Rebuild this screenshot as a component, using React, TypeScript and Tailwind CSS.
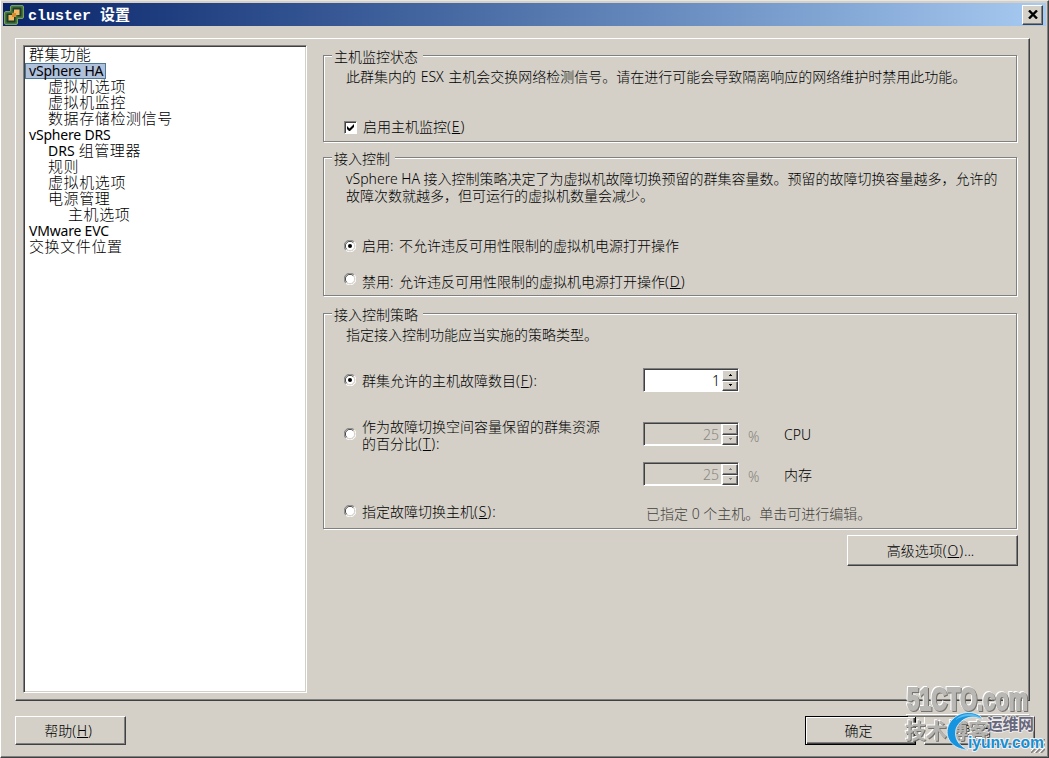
import React from 'react';
import clsx from 'clsx';

const treeItems = [
  { label: '群集功能', level: 0 },
  { label: 'vSphere HA', level: 0, latin: true, selected: true },
  { label: '虚拟机选项', level: 1 },
  { label: '虚拟机监控', level: 1 },
  { label: '数据存储检测信号', level: 1 },
  { label: 'vSphere DRS', level: 0, latin: true },
  { label: '组管理器', prefix: 'DRS', level: 1 },
  { label: '规则', level: 1 },
  { label: '虚拟机选项', level: 1 },
  { label: '电源管理', level: 1 },
  { label: '主机选项', level: 2 },
  { label: 'VMware EVC', level: 0, latin: true },
  { label: '交换文件位置', level: 0 },
];

const indents = ['pl-1', 'pl-[23px]', 'pl-[43px]'];

const AppIcon: React.FC = () => (
  <svg width="20" height="20" viewBox="0 0 20 20">
    <rect x="6" y="0" width="14" height="14" rx="3" fill="#a9c777" />
    <rect x="0" y="6" width="14" height="14" rx="3" fill="#a9c777" />
    <rect x="7.5" y="1.5" width="11" height="11" rx="2" fill="#1c3d2c" stroke="#44753c" strokeWidth="2" />
    <rect x="1.5" y="7.5" width="11" height="11" rx="2" fill="#1c3d2c" stroke="#44753c" strokeWidth="2" />
    <rect x="10" y="4.5" width="5.5" height="5.5" fill="#f0b860" />
    <rect x="4.5" y="10" width="5.5" height="5.5" fill="#f0b860" />
    <rect x="8" y="8" width="4" height="4" fill="#d98a2c" />
  </svg>
);

const GroupBox: React.FC<{ title: string; className: string; children: React.ReactNode }> = ({ title, className, children }) => (
  <section className={clsx('flex flex-col border border-[#808080] shadow-[1px_1px_0_#fff,inset_1px_1px_0_#fff]', className)}>
    <h2 className="-mt-[8px] ml-[8px] h-[18px] self-start bg-[#d4d0c8] pl-[2px] pr-[5px] font-light">{title}</h2>
    {children}
  </section>
);

const Hotkey: React.FC<{ letter: string }> = ({ letter }) => (
  <span className="tracking-[0.9px]">
    (<u>{letter}</u>)
  </span>
);

const Radio: React.FC<{ checked?: boolean }> = ({ checked }) => (
  <svg width="12" height="12" viewBox="0 0 12 12" className="shrink-0">
    <circle cx="6" cy="6" r="5" fill="#fff" />
    <path d="M1.8 10.2A5.5 5.5 0 0 1 10.2 1.8" fill="none" stroke="#808080" />
    <path d="M2.7 9.3A4.5 4.5 0 0 1 9.3 2.7" fill="none" stroke="#404040" />
    <path d="M10.2 1.8A5.5 5.5 0 0 1 1.8 10.2" fill="none" stroke="#fff" />
    <path d="M9.3 2.7A4.5 4.5 0 0 1 2.7 9.3" fill="none" stroke="#d4d0c8" />
    {checked && <circle cx="6" cy="6" r="2" fill="#000" />}
  </svg>
);

const SpinButton: React.FC<{ down?: boolean; disabled?: boolean }> = ({ down, disabled }) => (
  <div className="flex h-[11px] w-[16px] items-center justify-center border border-b-[#404040] border-l-white border-r-[#404040] border-t-white bg-[#d4d0c8] shadow-[inset_-1px_-1px_0_#808080]">
    <svg width="5" height="3" viewBox="0 0 5 3">
      <path d={down ? 'M1 0h3v1h-1v1h-1v-1h-1z' : 'M2 0h1v1h1v1h-3v-1h1z'} fill={disabled ? '#808080' : '#000'} />
    </svg>
  </div>
);

const Spinner: React.FC<{ value: number; disabled?: boolean }> = ({ value, disabled }) => (
  <div
    className={clsx(
      'mr-px flex h-[24px] w-[96px] shrink-0 border border-b-white border-l-[#808080] border-r-white border-t-[#808080]',
      disabled ? 'bg-[#d4d0c8] text-[#8a8880]' : 'bg-white'
    )}
  >
    <div className="flex flex-1 border-l border-t border-[#404040]">
      <span className={clsx('flex-1 pr-[2px] pt-[2px] text-right', disabled && 'border-b border-r border-white')}>{value}</span>
      <div className="flex w-[16px] flex-col">
        <SpinButton disabled={disabled} />
        <SpinButton down disabled={disabled} />
      </div>
    </div>
  </div>
);

const Button: React.FC<{ className: string; primary?: boolean; children: React.ReactNode }> = ({ className, primary, children }) => (
  <button
    className={clsx(
      'flex items-center justify-center border pr-[4px] font-light',
      primary
        ? 'border-black shadow-[inset_1px_1px_0_#fff,inset_-1px_-1px_0_#404040,inset_-2px_-2px_0_#808080]'
        : 'border-b-[#404040] border-l-white border-r-[#404040] border-t-white shadow-[inset_-1px_-1px_0_#808080]',
      className
    )}
  >
    <span>{children}</span>
  </button>
);

const Watermark: React.FC = () => (
  <svg className="absolute left-[899px] top-[665px] overflow-visible" width="149" height="92" viewBox="0 0 149 92">
    <g className="[filter:drop-shadow(1px_1px_0_#74726c)_drop-shadow(-1px_-1px_0_#fff)]">
      <text x="7" y="44" fontFamily="'Liberation Sans', sans-serif" fontWeight="bold" fontSize="32" textLength="121" lengthAdjust="spacingAndGlyphs" fill="#b9b8b5" stroke="#b9b8b5" strokeWidth="1.8">51CTO.com</text>
      <path d="M7 49.5H130" stroke="#a9a8a4" />
      <text x="5" y="72" fontFamily="'Noto Sans CJK SC', sans-serif" fontWeight="bold" fontSize="21" fill="#b5b4b0">技术博客</text>
    </g>
    <path d="M83 53C76 44 60 44 51 55C42 67 49 83 68 84C58 79 54 72 56 63C60 52 73 48 83 53Z" fill="#1694df" stroke="#e8f1f5" strokeWidth=".8" />
    <path d="M55 54C63 46 74 46 82 53C73 49 64 49 55 54Z" fill="#5bbcf0" />
    <text x="87" y="64" fontFamily="'Noto Sans CJK SC', sans-serif" fontWeight="bold" fontSize="16" textLength="47" fill="#68687c" stroke="#f2f2f2" strokeWidth="1.5" paintOrder="stroke">运维网</text>
    <text x="68" y="82" fontFamily="'Liberation Sans', sans-serif" fontWeight="bold" fontSize="16" textLength="76" lengthAdjust="spacingAndGlyphs" fill="#188fd5" stroke="#f2f2f2" strokeWidth="2" paintOrder="stroke">iyunv.com</text>
  </svg>
);

const App: React.FC = () => {
  return (
    <div
      lang="zh-CN"
      className="relative flex h-[758px] w-[1049px] flex-col overflow-hidden whitespace-nowrap border border-b-[#404040] border-l-white border-r-[#404040] border-t-[#e8e6e0] bg-[#d4d0c8] pl-[2px] pr-[2px] pt-[2px] font-['Noto_Sans','Noto_Sans_CJK_SC',sans-serif] text-[14px] leading-[18px] text-black shadow-[inset_-1px_-1px_0_#808080]"
    >
      <header className="flex h-[23px] shrink-0 items-center bg-linear-to-r from-[#0a246a] to-[#a6caf0] pl-px pr-[3px]">
        <AppIcon />
        <h1 className="ml-[4px] flex-1 pt-[4px] font-['Liberation_Mono','Noto_Sans_CJK_SC',monospace] text-[15px] font-bold text-white">cluster 设置</h1>
        <button className="flex h-[20px] w-[21px] items-center justify-center border border-b-[#404040] border-l-white border-r-[#404040] border-t-white bg-[#d4d0c8] shadow-[inset_-1px_-1px_0_#808080]">
          <svg width="10" height="9" viewBox="0 0 10 9">
            <path d="M1 .5L9 8.5M9 .5L1 8.5" stroke="#000" strokeWidth="2.4" />
          </svg>
        </button>
      </header>

      <main className="ml-[12px] mt-[12px] flex h-[663px] w-[1015px] shrink-0 border border-b-[#404040] border-l-white border-r-[#404040] border-t-white pl-[7px] pt-[6px] shadow-[inset_-1px_-1px_0_#808080]">
        <nav className="h-[648px] w-[284px] border border-b-white border-l-[#808080] border-r-white border-t-[#808080] bg-white shadow-[inset_1px_1px_0_#404040,inset_-1px_-1px_0_#d4d0c8]">
          <ul className="pl-px pt-px">
            {treeItems.map((item, i) => (
              <li key={i} className={clsx('flex h-[16px]', !item.selected && indents[item.level])}>
                <span
                  className={clsx(
                    'block h-[16px]',
                    item.latin ? 'text-[14px] tracking-[-0.2px]' : 'text-[15px] font-light tracking-[0.6px]',
                    item.selected ? 'w-[81px] border border-[#4b7896] bg-[#b0c1dc] pl-[3px] leading-[13px]' : item.latin ? 'leading-[16px]' : 'leading-[14px]'
                  )}
                >
                  {item.prefix && <span className="mr-[4px] text-[14px] font-normal tracking-normal">{item.prefix}</span>}
                  {item.label}
                </span>
              </li>
            ))}
          </ul>
        </nav>

        <div className="ml-[16px] mt-[10px] flex w-[695px] flex-col font-light">
          <GroupBox title="主机监控状态" className="h-[87px] w-[694px]">
            <p className="ml-[22px] mt-[2px] [word-spacing:1px]">此群集内的 ESX 主机会交换网络检测信号。请在进行可能会导致隔离响应的网络维护时禁用此功能。</p>
            <label className="ml-[20px] mt-[32px] flex items-center">
              <span className="flex h-[13px] w-[13px] items-center justify-center border border-b-white border-l-[#808080] border-r-white border-t-[#808080] bg-white shadow-[inset_1px_1px_0_#404040]">
                <svg width="7" height="7" viewBox="0 0 7 7">
                  <path d="M0 2v3l2 2h1l4-4V0L2.5 4.5z" fill="#000" />
                </svg>
              </span>
              <span className="ml-[6px]">
                启用主机监控
                <Hotkey letter="E" />
              </span>
            </label>
          </GroupBox>

          <GroupBox title="接入控制" className="mt-[15px] h-[139px] w-[694px]">
            <p className="ml-[22px] mt-[2px] leading-[17px]">
              vSphere HA 接入控制策略决定了为虚拟机故障切换预留的群集容量数。预留的故障切换容量越多，允许的
              <br />
              故障次数就越多，但可运行的虚拟机数量会减少。
            </p>
            <label className="ml-[20px] mt-[33px] flex items-center">
              <Radio checked />
              <span className="ml-[6px] [word-spacing:2px]">启用: 不允许违反可用性限制的虚拟机电源打开操作</span>
            </label>
            <label className="ml-[20px] mt-[18px] flex">
              <Radio />
              <span className="ml-[6px] [word-spacing:2px]">
                禁用: 允许违反可用性限制的虚拟机电源打开操作
                <Hotkey letter="D" />
              </span>
            </label>
          </GroupBox>

          <GroupBox title="接入控制策略" className="mt-[17px] h-[216px] w-[694px]">
            <p className="ml-[22px] mt-[2px]">指定接入控制功能应当实施的策略类型。</p>
            <div className="ml-[20px] mt-[24px] flex h-[24px] items-center">
              <label className="flex w-[299px] items-center">
                <Radio checked />
                <span className="ml-[6px] pt-px">
                  群集允许的主机故障数目
                  <Hotkey letter="F" />:
                </span>
              </label>
              <Spinner value={1} />
            </div>
            <div className="ml-[20px] mt-[27px] flex h-[84px]">
              <label className="flex w-[299px]">
                <span className="mt-[9px]">
                  <Radio />
                </span>
                <span className="-mt-px ml-[6px] leading-[17px]">
                  作为故障切换空间容量保留的群集资源
                  <br />
                  的百分比
                  <Hotkey letter="T" />:
                </span>
              </label>
              <div className="flex flex-col gap-[16px] pt-[3px]">
                {['CPU', '内存'].map((unit) => (
                  <div key={unit} className="flex h-[24px] items-center">
                    <Spinner value={25} disabled />
                    <span className="ml-[8px] mt-[5px] w-[36px] text-[#85837b]">%</span>
                    <span className="mt-[2px]">{unit}</span>
                  </div>
                ))}
              </div>
            </div>
            <div className="ml-[20px] flex items-start">
              <label className="flex w-[302px] items-start">
                <span className="mt-[2px]">
                  <Radio />
                </span>
                <span className="ml-[6px]">
                  指定故障切换主机
                  <Hotkey letter="S" />:
                </span>
              </label>
              <span className="mt-[2px] text-[#45423c]">已指定 0 个主机。单击可进行编辑。</span>
            </div>
          </GroupBox>

          <Button className="mt-[6px] h-[31px] w-[171px] self-end">
            高级选项
            <Hotkey letter="O" />
            ...
          </Button>
        </div>
      </main>

      <footer className="ml-[12px] mt-[15px] flex h-[29px] w-[1020px]">
        <Button className="w-[111px]">
          帮助
          <Hotkey letter="H" />
        </Button>
        <Button className="ml-auto w-[111px]" primary>
          确定
        </Button>
        <Button className="ml-[8px] w-[111px]">取消</Button>
      </footer>

      <svg className="absolute bottom-[4px] right-[3px]" width="14" height="14" viewBox="0 0 14 14">
        <path d="M0 14L14 0M5 14L14 5M10 14L14 10" stroke="#808080" strokeWidth="1.5" />
        <path d="M-2 14L14 -2M3 14L14 3M8 14L14 8" stroke="#fff" />
      </svg>
      <Watermark />
    </div>
  );
};

export default App;
